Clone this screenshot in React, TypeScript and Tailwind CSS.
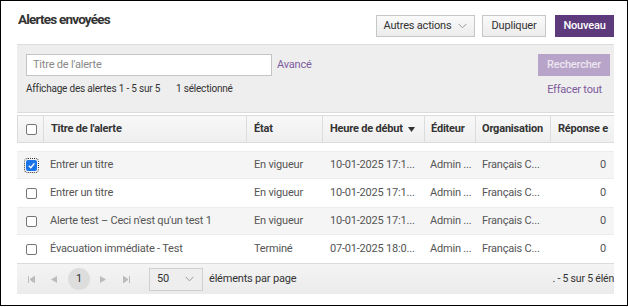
import React from 'react';

const COLS = 'grid grid-cols-[26px_203px_76px_102px_51px_75px_64px]';

interface AlertRow {
  id: number;
  title: string;
  state: string;
  start: string;
  checked?: boolean;
}

const ROWS: AlertRow[] = [
  { id: 1, title: 'Entrer un titre', state: 'En vigueur', start: '10-01-2025 17:1...', checked: true },
  { id: 2, title: 'Entrer un titre', state: 'En vigueur', start: '10-01-2025 17:1...' },
  { id: 3, title: "Alerte test – Ceci n'est qu'un test 1", state: 'En vigueur', start: '10-01-2025 17:1...' },
  { id: 4, title: 'Évacuation immédiate - Test', state: 'Terminé', start: '07-01-2025 18:0...' },
];

function Check({ checked }: { checked?: boolean }) {
  if (checked) {
    return (
      <span className="flex h-[11px] w-[11px] items-center justify-center rounded-[2px] bg-[#1a73e8] outline-1 outline-dotted outline-[#333] outline-offset-1">
        <svg width="9" height="9" viewBox="0 0 10 10">
          <path d="M2 5.2 4.2 7.4 8.2 2.6" fill="none" stroke="white" strokeWidth="1.6" />
        </svg>
      </span>
    );
  }
  return <span className="block h-[11px] w-[11px] rounded-[2px] border border-[#767676] bg-white" />;
}

function Btn({ children, className = '' }: { children: React.ReactNode; className?: string }) {
  return (
    <button
      className={`flex h-[22px] items-center justify-center border border-[#c6c6c6] bg-gradient-to-b from-[#fafafa] to-[#ececec] text-[#333] ${className}`}
    >
      {children}
    </button>
  );
}

export default function App() {
  return (
    <div className="h-[306px] w-[628px] overflow-hidden border border-black bg-white font-['Roboto',sans-serif] text-[11px] tracking-[-0.2px] text-[#444]">
      <div className="pl-[16px] pr-[13px]">
        <div className="flex h-[43px] items-start justify-between">
          <h1 className="ml-[1px] mt-[8px] text-[13.5px] font-bold tracking-[-0.8px] text-[#333]">Alertes envoyées</h1>
          <div className="mt-[14px] flex">
            <Btn className="w-[99px] gap-[7px]">
              Autres actions
              <svg width="9" height="6" viewBox="0 0 9 6">
                <path d="M0.5 0.8 4.5 4.8 8.5 0.8" fill="none" stroke="#999" strokeWidth="1" />
              </svg>
            </Btn>
            <Btn className="ml-[7px] w-[64px]">Dupliquer</Btn>
            <button className="ml-[9px] flex h-[22px] w-[59px] items-center justify-center bg-[#5c3a7c] font-medium text-white">
              Nouveau
            </button>
          </div>
        </div>

        <div className="flex h-[69px] justify-between border-y border-[#dcdcdc] bg-[#eeeeee] pl-[9px] pr-[4px] pt-[9px]">
          <div>
            <div className="flex items-center">
              <div className="flex h-[22px] w-[246px] items-center border border-[#c4c4c4] bg-white px-[6px] text-[#888]">
                Titre de l'alerte
              </div>
              <span className="ml-[5px] text-[#7d5b9c]">Avancé</span>
            </div>
            <div className="mt-[5px] flex whitespace-nowrap text-[10px] text-[#333]">
              <span className="w-[150px]">Affichage des alertes 1 - 5 sur 5</span>
              <span>1 sélectionné</span>
            </div>
          </div>
          <div className="flex flex-col items-end">
            <button className="flex h-[22px] w-[72px] items-center justify-center bg-[#b9a4c9] font-medium text-[#ece6f0]">
              Rechercher
            </button>
            <span className="mr-[8px] mt-[6px] text-[#7d5b9c]">Effacer tout</span>
          </div>
        </div>

        <div className="mt-[2px] overflow-hidden">
          <div className={`${COLS} h-[28px] whitespace-nowrap border-y border-[#dcdcdc] bg-gradient-to-b from-[#f8f8f8] to-[#efefef] font-bold text-[#333]`}>
            <div className="flex items-center justify-center border-l border-[#dcdcdc] pl-[2px]">
              <Check />
            </div>
            <div className="flex items-center border-l border-[#dcdcdc] pl-[7px]">Titre de l'alerte</div>
            <div className="flex items-center border-l border-[#dcdcdc] pl-[7px]">État</div>
            <div className="flex items-center gap-[5px] border-l border-[#dcdcdc] pl-[7px]">
              Heure de début
              <svg width="7" height="5" viewBox="0 0 7 5">
                <path d="M0 0h7L3.5 5z" fill="#333" />
              </svg>
            </div>
            <div className="flex items-center border-l border-[#dcdcdc] pl-[6px]">Éditeur</div>
            <div className="flex items-center border-l border-[#dcdcdc] pl-[6px]">Organisation</div>
            <div className="flex items-center border-l border-[#dcdcdc] pl-[7px]">Réponse e</div>
          </div>
          <div className="h-[8px]" />
          {ROWS.map((r, i) => (
            <div
              key={r.id}
              className={`${COLS} h-[28px] whitespace-nowrap text-[#555] ${i % 2 === 0 ? 'bg-[#f5f5f5] border-y border-[#ececec]' : 'bg-white'}`}
            >
              <div className="flex items-center justify-center pl-[2px]">
                <Check checked={r.checked} />
              </div>
              <div className="flex items-center pl-[7px]">{r.title}</div>
              <div className="flex items-center pl-[8px]">{r.state}</div>
              <div className="flex items-center pl-[8px]">{r.start}</div>
              <div className="flex items-center pl-[6px]">Admin ...</div>
              <div className="flex items-center pl-[7px]">Français C...</div>
              <div className="flex items-center justify-end pr-[8px]">0</div>
            </div>
          ))}
          <div className="flex h-[31px] items-center border-t border-[#dcdcdc] bg-gradient-to-b from-[#f4f4f4] to-[#ebebeb] pl-[11px] text-[#333]">
            <span className="flex w-[23px] items-center">
              <svg width="7" height="7" viewBox="0 0 7 7">
                <path d="M0.5 0v7M7 0v7L2 3.5z" fill="#bbb" stroke="#bbb" strokeWidth="1" />
              </svg>
            </span>
            <span className="flex w-[17px] items-center">
              <svg width="6" height="7" viewBox="0 0 6 7">
                <path d="M6 0v7L0 3.5z" fill="#bbb" />
              </svg>
            </span>
            <span className="flex h-[22px] w-[22px] items-center justify-center rounded-full bg-[#dddddd]">1</span>
            <span className="ml-[10px] flex w-[23px] items-center">
              <svg width="6" height="7" viewBox="0 0 6 7">
                <path d="M0 0v7L6 3.5z" fill="#bbb" />
              </svg>
            </span>
            <span className="flex w-[26px] items-center">
              <svg width="7" height="7" viewBox="0 0 7 7">
                <path d="M0 0v7L5 3.5zM6.5 0v7" fill="#bbb" stroke="#bbb" strokeWidth="1" />
              </svg>
            </span>
            <div className="flex h-[23px] w-[54px] items-center justify-between border border-[#d0d0d0] bg-[#eeeeee] pl-[7px] pr-[8px]">
              <span>50</span>
              <svg width="9" height="6" viewBox="0 0 9 6">
                <path d="M0.5 0.8 4.5 4.8 8.5 0.8" fill="none" stroke="#999" strokeWidth="1" />
              </svg>
            </div>
            <span className="ml-[6px]">éléments par page</span>
            <span className="ml-auto whitespace-nowrap text-[10.5px]">. - 5 sur 5 élén</span>
          </div>
        </div>
      </div>
    </div>
  );
}
